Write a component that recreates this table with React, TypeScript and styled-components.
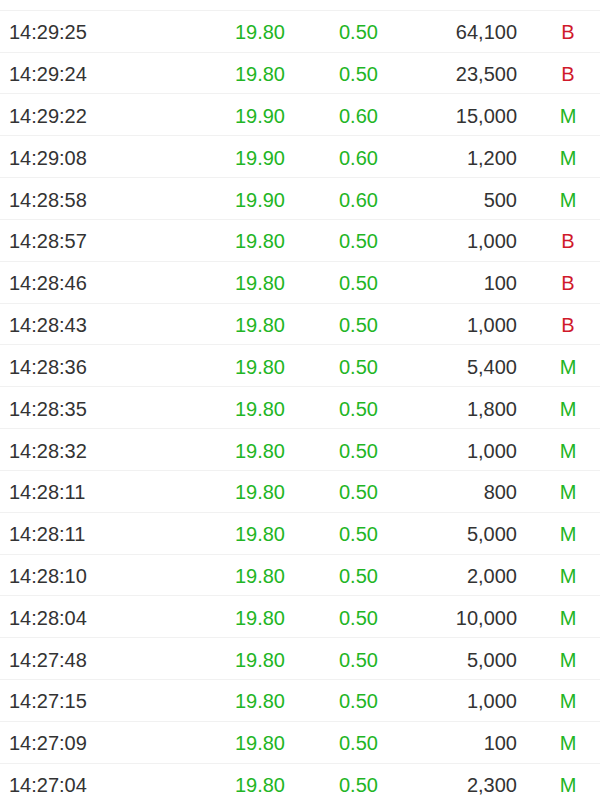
import React from 'react';
import styled, { createGlobalStyle } from 'styled-components';

const GlobalStyle = createGlobalStyle`
  html, body {
    margin: 0;
    padding: 0;
    background: #ffffff;
    overflow: hidden;
  }
  body {
    font-family: 'Liberation Sans', Arial, sans-serif;
  }
`;

type Trade = {
  time: string;
  price: string;
  change: string;
  volume: string;
  side: 'B' | 'M';
};

const trades: Trade[] = [
  { time: '14:29:25', price: '19.80', change: '0.50', volume: '64,100', side: 'B' },
  { time: '14:29:24', price: '19.80', change: '0.50', volume: '23,500', side: 'B' },
  { time: '14:29:22', price: '19.90', change: '0.60', volume: '15,000', side: 'M' },
  { time: '14:29:08', price: '19.90', change: '0.60', volume: '1,200', side: 'M' },
  { time: '14:28:58', price: '19.90', change: '0.60', volume: '500', side: 'M' },
  { time: '14:28:57', price: '19.80', change: '0.50', volume: '1,000', side: 'B' },
  { time: '14:28:46', price: '19.80', change: '0.50', volume: '100', side: 'B' },
  { time: '14:28:43', price: '19.80', change: '0.50', volume: '1,000', side: 'B' },
  { time: '14:28:36', price: '19.80', change: '0.50', volume: '5,400', side: 'M' },
  { time: '14:28:35', price: '19.80', change: '0.50', volume: '1,800', side: 'M' },
  { time: '14:28:32', price: '19.80', change: '0.50', volume: '1,000', side: 'M' },
  { time: '14:28:11', price: '19.80', change: '0.50', volume: '800', side: 'M' },
  { time: '14:28:11', price: '19.80', change: '0.50', volume: '5,000', side: 'M' },
  { time: '14:28:10', price: '19.80', change: '0.50', volume: '2,000', side: 'M' },
  { time: '14:28:04', price: '19.80', change: '0.50', volume: '10,000', side: 'M' },
  { time: '14:27:48', price: '19.80', change: '0.50', volume: '5,000', side: 'M' },
  { time: '14:27:15', price: '19.80', change: '0.50', volume: '1,000', side: 'M' },
  { time: '14:27:09', price: '19.80', change: '0.50', volume: '100', side: 'M' },
  { time: '14:27:04', price: '19.80', change: '0.50', volume: '2,300', side: 'M' },
];

const Viewport = styled.div`
  height: 800px;
  overflow: hidden;
  background: #ffffff;
`;

const TradeList = styled.div`
  display: flex;
  flex-direction: column;
`;

// tail of the row scrolled out above
const ScrolledEdge = styled.div`
  height: 10.83px;
  box-sizing: border-box;
  border-bottom: 1px solid #f1f1f1;
`;

const TradeRow = styled.div`
  display: grid;
  grid-template-columns: 176px 100px 132px 100px 1fr;
  align-items: center;
  height: 41.83px;
  box-sizing: border-box;
  padding: 2px 0 0 9px;
  border-bottom: 1px solid #f1f1f1;
  font-size: 20px;
  line-height: 1;
`;

const TimeCell = styled.span`
  color: #333333;
`;

const PriceCell = styled.span`
  color: #22b524;
  text-align: right;
`;

const ChangeCell = styled.span`
  color: #22b524;
  padding-left: 54px;
`;

const VolumeCell = styled.span`
  color: #333333;
  text-align: right;
`;

const SideCell = styled.span<{ $side: 'B' | 'M' }>`
  color: ${(p) => (p.$side === 'B' ? '#d0192b' : '#22b524')};
  padding-left: 19px;
  width: 64px;
  text-align: center;
`;

const App: React.FC = () => {
  return (
    <Viewport>
      <GlobalStyle />
      <TradeList>
        <ScrolledEdge />
        {trades.map((t, key) => (
          <TradeRow key={key}>
            <TimeCell>{t.time}</TimeCell>
            <PriceCell>{t.price}</PriceCell>
            <ChangeCell>{t.change}</ChangeCell>
            <VolumeCell>{t.volume}</VolumeCell>
            <SideCell $side={t.side}>{t.side}</SideCell>
          </TradeRow>
        ))}
      </TradeList>
    </Viewport>
  );
};

export default App;
